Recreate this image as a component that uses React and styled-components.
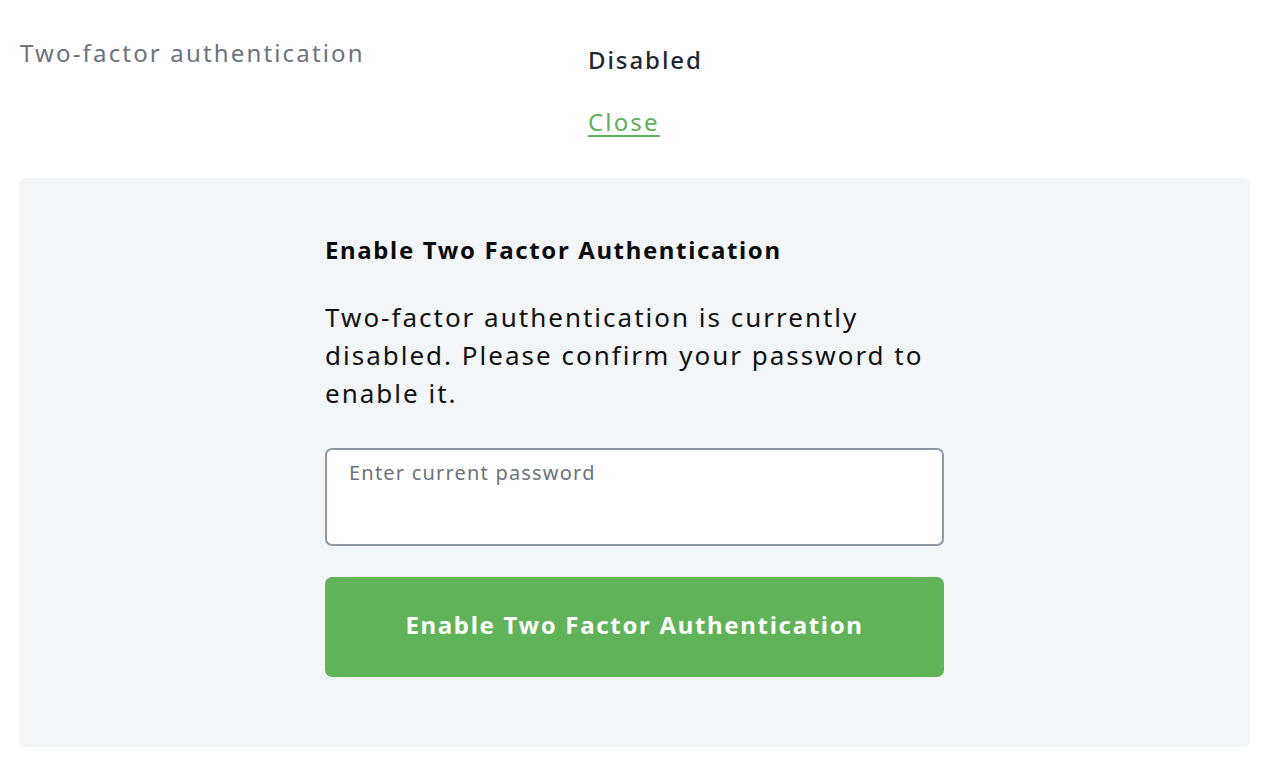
import styled, { createGlobalStyle } from 'styled-components';

const GlobalStyle = createGlobalStyle`
  body {
    margin: 0;
    background: #ffffff;
    font-family: "Noto Sans", "Open Sans", sans-serif;
    letter-spacing: 0.07em;
  }
`;

function App() {
  return (
    <>
      <GlobalStyle />
      <Page>
        <Row>
          <Label>Two-factor authentication</Label>
          <Status>
            <StatusText>Disabled</StatusText>
            <CloseLink href="#">Close</CloseLink>
          </Status>
        </Row>
        <Panel>
          <Form>
            <Heading>Enable Two Factor Authentication</Heading>
            <Description>
              Two-factor authentication is currently disabled. Please confirm your password to
              enable it.
            </Description>
            <PasswordBox>
              <PasswordInput type="password" placeholder="Enter current password" />
            </PasswordBox>
            <SubmitButton>Enable Two Factor Authentication</SubmitButton>
          </Form>
        </Panel>
      </Page>
    </>
  );
}

export default App;

const Page = styled.div`
  padding: 36px 30px 14px 19px;
  display: flex;
  flex-direction: column;
  gap: 38px;
`;

const Row = styled.div`
  display: grid;
  grid-template-columns: 569px 1fr;
`;

const Label = styled.div`
  padding-left: 1px;
  font-size: 24px;
  line-height: 34px;
  letter-spacing: 0.09em;
  color: #6b7280;
`;

const Status = styled.div`
  display: flex;
  flex-direction: column;
  align-items: flex-start;
  gap: 26px;
  padding-top: 6px;
`;

const StatusText = styled.span`
  font-size: 24px;
  line-height: 36px;
  font-weight: 500;
  letter-spacing: 0.08em;
  color: #1f2733;
`;

const CloseLink = styled.a`
  font-size: 24px;
  line-height: 36px;
  letter-spacing: 0.09em;
  color: #5cb15a;
  text-decoration: underline;
  text-underline-offset: 4px;
`;

const Panel = styled.div`
  background: #f3f6f9;
  border-radius: 6px;
  padding: 54px 0 70px;
  display: flex;
  justify-content: center;
`;

const Form = styled.div`
  width: 619px;
  display: flex;
  flex-direction: column;
`;

const Heading = styled.h2`
  margin: 0 0 30px;
  font-size: 24px;
  line-height: 36px;
  font-weight: 700;
  letter-spacing: 0.068em;
  color: #0b0b0b;
`;

const Description = styled.p`
  margin: 0 0 36px;
  font-size: 26px;
  line-height: 38px;
  letter-spacing: 0.077em;
  color: #111111;
`;

const PasswordBox = styled.div`
  height: 98px;
  box-sizing: border-box;
  border: 2px solid #8e97a6;
  border-radius: 7px;
  background: #ffffff;
  margin-bottom: 31px;
`;

const PasswordInput = styled.input`
  width: 100%;
  box-sizing: border-box;
  border: none;
  outline: none;
  background: transparent;
  padding: 8px 22px;
  font-family: inherit;
  font-size: 20px;
  line-height: 30px;
  letter-spacing: 0.06em;
  color: #1f2733;

  &::placeholder {
    color: #6b7280;
  }
`;

const SubmitButton = styled.button`
  height: 100px;
  padding: 0 0 6px;
  border: none;
  border-radius: 7px;
  background: #61b35a;
  color: #ffffff;
  font-family: inherit;
  font-size: 24px;
  font-weight: 700;
  letter-spacing: 0.07em;
  cursor: pointer;
`;
